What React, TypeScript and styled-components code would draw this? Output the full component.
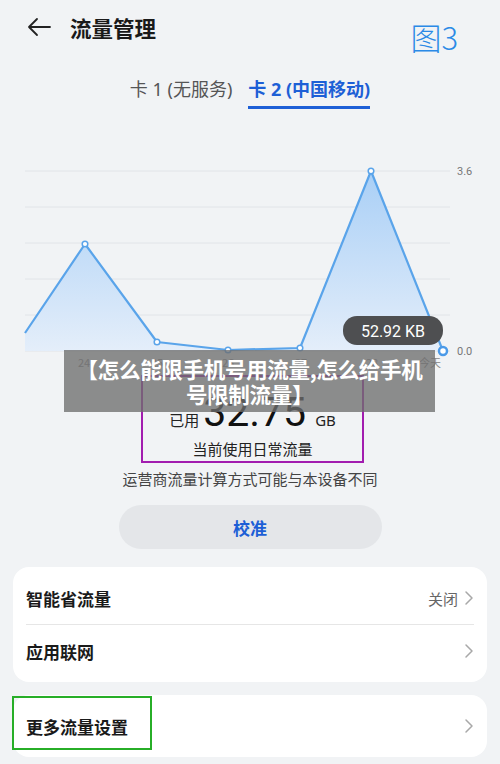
import React from "react";
import styled, { createGlobalStyle } from "styled-components";

const GlobalStyle = createGlobalStyle`
  html, body {
    margin: 0;
    padding: 0;
    background: #f1f3f5;
  }
  body {
    font-family: "Noto Sans", "Noto Sans CJK SC", sans-serif;
    color: #1a1a1a;
  }
`;

const Page = styled.div`
  position: relative;
  width: 500px;
  height: 764px;
  overflow: hidden;
  background: #f1f3f5;
`;

const Header = styled.div`
  display: flex;
  align-items: center;
  height: 56px;
  padding: 0 0 0 26px;
`;

const Back = styled.svg`
  width: 26px;
  height: 20px;
  margin-right: 18px;
  margin-top: -2px;
`;

const Title = styled.h1`
  margin: 0;
  font-size: 21.5px;
  font-weight: 700;
  margin-top: -2px;
  flex: 1;
`;

const Figure = styled.div`
  font-family: "Noto Sans CJK SC", sans-serif;
  font-size: 31px;
  font-weight: 300;
  color: #2b8ae6;
  margin-right: 42px;
  margin-top: 16px;
`;

const Tabs = styled.div`
  display: flex;
  justify-content: center;
  gap: 16px;
  margin-top: 20px;
  padding-left: 0;
`;

const Tab = styled.div<{ $active?: boolean }>`
  font-size: 18px;
  line-height: 26px;
  font-weight: ${(p) => (p.$active ? 700 : 400)};
  color: ${(p) => (p.$active ? "#1d5fd6" : "#555")};
  padding-bottom: 4px;
  border-bottom: 3px solid ${(p) => (p.$active ? "#1d5fd6" : "transparent")};
`;

const Chart = styled.svg`
  display: block;
  margin-top: 26px;
  width: 500px;
  height: 235px;
`;

const Usage = styled.div`
  box-sizing: border-box;
  width: 223px;
  height: 88px;
  margin: 5px 0 0 141px;
  border: 2px solid #a21caf;
  display: flex;
  flex-direction: column;
  align-items: center;
`;

const UsedRow = styled.div`
  display: flex;
  align-items: baseline;
  margin-top: 11px;
  height: 54px;
`;

const UsedLabel = styled.span`
  font-size: 15px;
  color: #222;
  margin-right: 4px;
`;

const UsedValue = styled.span`
  font-family: "Roboto", "Noto Sans", sans-serif;
  font-size: 41px;
  font-weight: 400;
  line-height: 48px;
  color: #111;
`;

const UsedUnit = styled.span`
  font-size: 15px;
  color: #222;
  margin-left: 9px;
`;

const UsageCaption = styled.div`
  font-size: 15px;
  color: #222;
  margin-top: -4px;
`;

const Note = styled.div`
  text-align: center;
  font-size: 15px;
  color: #444;
  margin-top: 5px;
`;

const Calibrate = styled.button`
  display: block;
  width: 263px;
  height: 44px;
  margin: 16px auto 0;
  border: none;
  border-radius: 22px;
  background: #e4e6e9;
  color: #1d5fd6;
  font-family: inherit;
  font-size: 17px;
  font-weight: 700;
`;

const Card = styled.div`
  position: relative;
  margin: 0 13px;
  background: #fff;
  border-radius: 16px;
  padding: 5px 13px;
`;

const Row = styled.div<{ $divider?: boolean }>`
  display: flex;
  align-items: center;
  height: 52px;
  border-bottom: ${(p) => (p.$divider ? "1px solid #e6e6e6" : "none")};
`;

const RowLabel = styled.div`
  flex: 1;
  font-size: 17px;
  font-weight: 700;
  color: #1a1a1a;
`;

const RowValue = styled.div`
  font-size: 15px;
  color: #666;
  margin-right: 6px;
`;

const Chevron = styled.svg`
  width: 10px;
  height: 16px;
`;

const Gap = styled.div<{ $h: number }>`
  height: ${(p) => p.$h}px;
`;

const GreenMark = styled.div`
  position: absolute;
  left: -1px;
  top: 1px;
  width: 140px;
  height: 54px;
  box-sizing: border-box;
  border: 2px solid #27ae27;
`;

const Banner = styled.div`
  position: absolute;
  left: 64px;
  top: 350px;
  width: 371px;
  height: 62px;
  background: rgba(110, 110, 110, 0.78);
  color: #fff;
  font-family: "Noto Sans CJK SC", sans-serif;
  font-size: 21.5px;
  font-weight: 700;
  line-height: 25px;
  text-align: center;
  display: flex;
  align-items: center;
  justify-content: center;
  white-space: nowrap;
  letter-spacing: -0.3px;
`;

const ChevronIcon = () => (
  <Chevron viewBox="0 0 10 16">
    <path d="M2 2l6 6-6 6" fill="none" stroke="#a8a8a8" strokeWidth="1.5" strokeLinecap="round" strokeLinejoin="round" />
  </Chevron>
);

const pts: [number, number][] = [
  [25, 198],
  [85, 109],
  [157, 207],
  [228, 215],
  [300, 213],
  [371, 36],
  [443, 216],
];

const grid = [36, 72, 108, 144, 180, 216];

const xLabels: [number, string][] = [
  [84, "24"],
  [157, "25"],
  [228, "26"],
  [301, "27"],
  [372, "28"],
  [430, "今天"],
];

const TrafficChart = () => {
  const line = pts.map(([x, y], i) => `${i ? "L" : "M"}${x} ${y}`).join(" ");
  const area = `${line} L443 216 L25 216 Z`;
  return (
    <Chart viewBox="0 0 500 235">
      <defs>
        <linearGradient id="fill" x1="0" y1="0" x2="0" y2="1">
          <stop offset="0" stopColor="#a9cff6" />
          <stop offset="1" stopColor="#e4eefa" />
        </linearGradient>
      </defs>
      {grid.map((y) => (
        <line key={y} x1="25" x2="450" y1={y} y2={y} stroke="#e1e4e8" strokeWidth="1" />
      ))}
      <path d={area} fill="url(#fill)" />
      <path d={line} fill="none" stroke="#5aa4ea" strokeWidth="2.2" strokeLinejoin="round" />
      {pts.slice(1, 6).map(([x, y]) => (
        <circle key={x} cx={x} cy={y} r="2.8" fill="#fff" stroke="#5aa4ea" strokeWidth="1.5" />
      ))}
      <circle cx="443" cy="216" r="4" fill="#fff" stroke="#4b9ae8" strokeWidth="2.5" />
      <text x="457" y="40" fontSize="11" fill="#777" fontFamily="Roboto, sans-serif">3.6</text>
      <text x="457" y="220" fontSize="11" fill="#777" fontFamily="Roboto, sans-serif">0.0</text>
      {xLabels.map(([x, t]) => (
        <text key={t} x={x} y="232" fontSize="11" fill="#888" textAnchor="middle" fontFamily="Noto Sans CJK SC, sans-serif">
          {t}
        </text>
      ))}
      <rect x="343" y="181" width="100" height="29" rx="14" fill="#4e4f51" />
      <text x="393" y="201.5" fontSize="16" fill="#fff" textAnchor="middle" fontFamily="Roboto, Noto Sans, sans-serif">
        52.92 KB
      </text>
    </Chart>
  );
};

export default function App() {
  return (
    <Page>
      <GlobalStyle />
      <Header>
        <Back viewBox="0 0 26 20">
          <path d="M24 10H3M11 2L3 10l8 8" fill="none" stroke="#222" strokeWidth="1.8" strokeLinecap="round" strokeLinejoin="round" />
        </Back>
        <Title>流量管理</Title>
        <Figure>图3</Figure>
      </Header>
      <Tabs>
        <Tab>卡 1 (无服务)</Tab>
        <Tab $active>卡 2 (中国移动)</Tab>
      </Tabs>
      <TrafficChart />
      <Usage>
        <UsedRow>
          <UsedLabel>已用</UsedLabel>
          <UsedValue>32.75</UsedValue>
          <UsedUnit>GB</UsedUnit>
        </UsedRow>
        <UsageCaption>当前使用日常流量</UsageCaption>
      </Usage>
      <Note>运营商流量计算方式可能与本设备不同</Note>
      <Calibrate>校准</Calibrate>
      <Gap $h={18} />
      <Card>
        <Row $divider>
          <RowLabel>智能省流量</RowLabel>
          <RowValue>关闭</RowValue>
          <ChevronIcon />
        </Row>
        <Row>
          <RowLabel>应用联网</RowLabel>
          <ChevronIcon />
        </Row>
      </Card>
      <Gap $h={13} />
      <Card>
        <Row>
          <RowLabel>更多流量设置</RowLabel>
          <ChevronIcon />
        </Row>
        <GreenMark />
      </Card>
      <Banner>
        【怎么能限手机号用流量,怎么给手机
        <br />
        号限制流量】
      </Banner>
    </Page>
  );
}
